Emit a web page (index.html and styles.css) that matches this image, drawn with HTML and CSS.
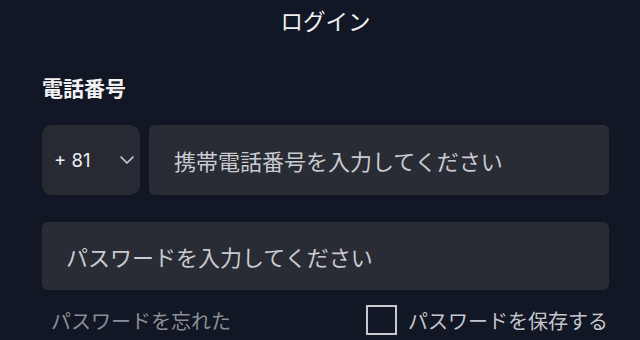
FILE: index.html
```html
<!DOCTYPE html>
<html lang="ja">
<head>
<meta charset="utf-8">
<title>ログイン</title>
<link rel="stylesheet" href="styles.css">
</head>
<body>
<main class="page">
  <h1 class="title">ログイン</h1>
  <div class="label">電話番号</div>
  <div class="phone-row">
    <div class="country">
      <span class="code">+ 81</span>
      <svg class="chev" width="14" height="8" viewBox="0 0 14 8"><path d="M1 1 L7 7 L13 1" fill="none" stroke="#cfd0d4" stroke-width="1.6" stroke-linecap="round" stroke-linejoin="round"/></svg>
    </div>
    <div class="field phone">携帯電話番号を入力してください</div>
  </div>
  <div class="field password">パスワードを入力してください</div>
  <div class="bottom-row">
    <span class="forgot">パスワードを忘れた</span>
    <label class="remember"><span class="box"></span><span>パスワードを保存する</span></label>
  </div>
</main>
</body>
</html>
```

FILE: styles.css
```css
html, body {
  margin: 0;
  padding: 0;
  background: #121725;
  width: 640px;
  height: 340px;
  overflow: hidden;
}
.page {
  padding: 0 31px 0 42px;
  font-family: "Noto Sans CJK JP", "Noto Sans", sans-serif;
  color: #e6e7ea;
}
.title {
  margin: 0;
  padding-top: 5px;
  font-size: 22.5px;
  line-height: 30px;
  font-weight: 400;
  text-align: center;
  color: #eeeff1;
}
.label {
  margin-top: 37px;
  font-size: 21px;
  line-height: 30px;
  font-weight: 700;
  color: #f2f2f4;
}
.phone-row {
  margin-top: 23px;
  display: flex;
  gap: 9px;
  height: 70px;
}
.country {
  width: 98px;
  background: #272a33;
  border-radius: 10px;
  display: flex;
  align-items: center;
  justify-content: space-between;
  padding: 0 6px 0 12px;
  box-sizing: border-box;
}
.code {
  font-family: Inter, "Noto Sans", sans-serif;
  font-size: 18.5px;
  color: #eceef0;
}
.field {
  background: #2a2c35;
  border-radius: 6px;
  display: flex;
  align-items: center;
  font-size: 22px;
  color: #c9cacf;
  box-sizing: border-box;
}
.phone {
  flex: 1;
  padding-left: 25px;
}
.password {
  margin-top: 27px;
  height: 68px;
  padding-left: 24px;
}
.bottom-row {
  display: flex;
  justify-content: space-between;
  align-items: center;
  height: 40px;
  margin-top: 10px;
  padding-left: 9px;
  font-size: 20px;
}
.forgot {
  color: #8b8e97;
}
.remember {
  display: flex;
  align-items: center;
  gap: 11px;
  color: #c4c5ca;
  margin-right: 1px;
}
.box {
  width: 31px;
  height: 30px;
  border: 2px solid #c9cacf;
  box-sizing: border-box;
}
```
